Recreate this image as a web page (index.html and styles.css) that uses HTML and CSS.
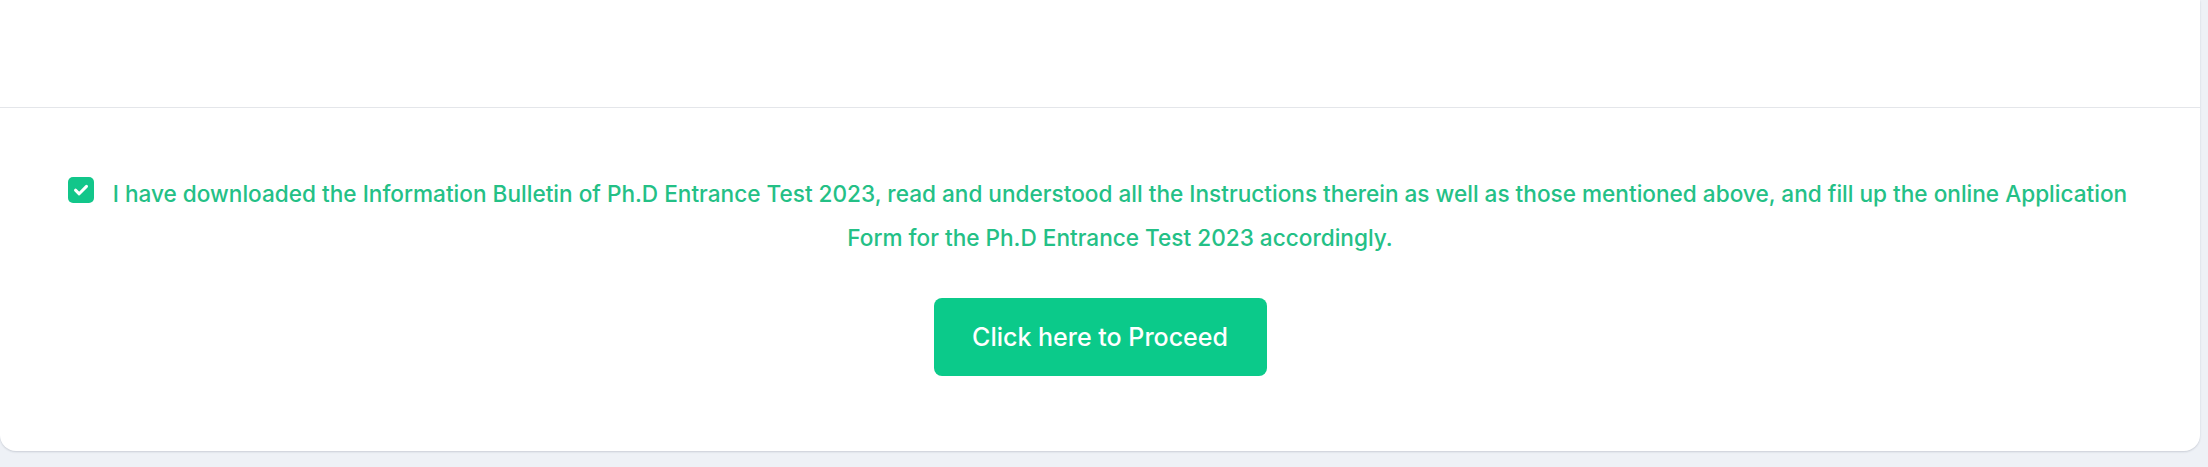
FILE: index.html
```html
<!DOCTYPE html>
<html lang="en">
<head>
<meta charset="utf-8">
<title>Proceed</title>
<link rel="stylesheet" href="styles.css">
</head>
<body>
<div class="page">
  <div class="card">
    <div class="card-top"></div>
    <div class="card-body">
      <div class="form-check">
        <span class="check-box">
          <svg viewBox="0 0 26 26" width="26" height="26" aria-hidden="true">
            <path d="M7.5 13.2 L11.2 16.8 L18.5 9.4" fill="none" stroke="#ffffff" stroke-width="3" stroke-linecap="round" stroke-linejoin="round"/>
          </svg>
        </span>
        <label class="check-label">I have downloaded the Information Bulletin of Ph.D Entrance Test 2023, read and understood all the Instructions therein as well as those mentioned above, and fill up the online Application Form for the Ph.D Entrance Test 2023 accordingly.</label>
      </div>
      <div class="actions">
        <button class="btn-proceed" type="button">Click here to Proceed</button>
      </div>
    </div>
  </div>
</div>
</body>
</html>
```

FILE: styles.css
```css
html, body {
  margin: 0;
  padding: 0;
}
body {
  background: #eef1f6;
  font-family: "Inter", "Noto Sans", sans-serif;
  width: 2208px;
  height: 467px;
  overflow: hidden;
}
.page {
  padding-right: 8px;
}
.card {
  background: #ffffff;
  border-radius: 0 0 16px 16px;
  box-shadow: 0 1px 2px rgba(40, 50, 70, 0.18);
}
.card-top {
  height: 107px;
  border-bottom: 1px solid #e4e6ea;
}
.card-body {
  padding: 64px 69px 75px 69px;
}
.form-check {
  padding-left: 40px;
  text-align: center;
  color: #24c086;
  font-size: 22.6px;
  font-weight: 500;
  line-height: 44px;
}
.check-box {
  float: left;
  width: 26px;
  height: 26px;
  margin-left: -41px;
  margin-top: 5px;
  background: #12c68a;
  border-radius: 5px;
  display: flex;
  align-items: center;
  justify-content: center;
}
.check-box svg {
  display: block;
}
.actions {
  display: flex;
  justify-content: center;
  margin-top: 38px;
}
.btn-proceed {
  width: 333px;
  height: 78px;
  border: none;
  border-radius: 8px;
  background: #0bca8a;
  color: #ffffff;
  font-family: "Inter", "Noto Sans", sans-serif;
  font-size: 25px;
  font-weight: 500;
  cursor: pointer;
}
```
